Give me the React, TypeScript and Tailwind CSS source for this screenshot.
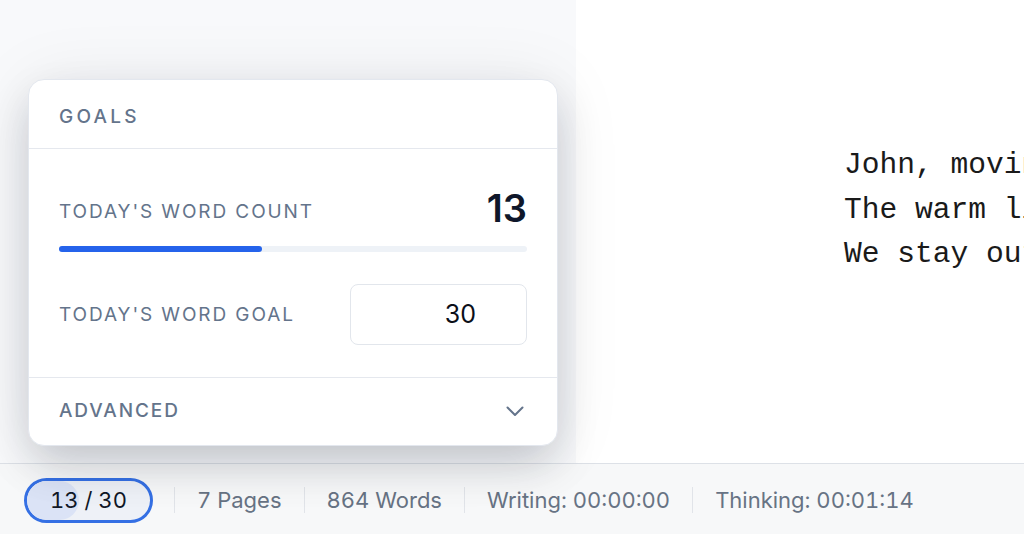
import React from "react";

const stats = ["7 Pages", "864 Words", "Writing: 00:00:00", "Thinking: 00:01:14"];

const scriptLines = [
  "John, moving toward the window, stops.",
  "The warm light of the lamp fades out.",
  "We stay outside as the rain begins.",
];

function Chevron() {
  return (
    <svg width="18" height="11" viewBox="0 0 18 11" fill="none">
      <path d="M1.5 1.5 9 9l7.5-7.5" stroke="#64748b" strokeWidth="2" strokeLinecap="round" strokeLinejoin="round" />
    </svg>
  );
}

function GoalsCard() {
  const count = 13;
  const goal = 30;
  return (
    <div className="relative z-10 w-[530px] rounded-2xl border border-[#e3e7ee] bg-white shadow-[0_20px_44px_-4px_rgba(15,23,42,0.2),0_4px_70px_rgba(15,23,42,0.08)]">
      <div className="flex h-[69px] items-center border-b border-[#e5e8ee] px-[30px] pt-[6px]">
        <span className="text-[19px] font-medium tracking-[0.17em] text-[#64748b]">GOALS</span>
      </div>

      <div className="border-b border-[#e5e8ee] px-[30px] pt-[37px] pb-[32px]">
        <div className="flex h-[44px] items-center justify-between">
          <span className="mt-[8px] text-[19px] tracking-[0.1em] text-[#64748b]">TODAY&apos;S WORD COUNT</span>
          <span className="text-[38px] font-semibold text-[#0f172a]">{count}</span>
        </div>
        <div className="mt-[16px] h-[6px] w-full rounded-full bg-[#eef2f7]">
          <div className="h-full rounded-full bg-[#2563eb]" style={{ width: `${(count / goal) * 100}%` }} />
        </div>
        <div className="mt-[32px] flex items-center justify-between">
          <span className="mt-[1px] text-[19px] tracking-[0.1em] text-[#64748b]">TODAY&apos;S WORD GOAL</span>
          <div className="flex h-[61px] w-[177px] items-center justify-end rounded-lg border border-[#e2e6ec] pr-[50px]">
            <span className="text-[25px] text-[#0b0f19]">{goal}</span>
          </div>
        </div>
      </div>

      <div className="flex h-[67px] items-center justify-between pl-[30px] pr-[33px]">
        <span className="text-[19px] font-medium tracking-[0.1em] text-[#64748b]">ADVANCED</span>
        <Chevron />
      </div>
    </div>
  );
}

export default function App() {
  return (
    <div className="flex h-[534px] w-[1024px] flex-col overflow-hidden font-['Inter',sans-serif]">
      <div className="flex min-h-0 flex-1">
        <aside className="w-[576px] shrink-0 bg-[#f8f9fb] pt-[79px] pl-[28px]">
          <GoalsCard />
        </aside>
        <main className="flex-1 overflow-hidden bg-white pt-[143px] pl-[268px]">
          {scriptLines.map((line) => (
            <div
              key={line}
              className="whitespace-nowrap font-['Liberation_Mono',monospace] text-[29.6px] leading-[44.5px] text-[#1a1a1a]"
            >
              {line}
            </div>
          ))}
        </main>
      </div>

      <footer className="flex h-[71px] shrink-0 items-center gap-[22px] border-t border-[#dde1e7] bg-[#f7f8f9] pl-[24px] pt-[2px]">
        <div className="relative mr-[-1px] flex h-[45px] w-[129px] items-center justify-center overflow-hidden rounded-full border-[3px] border-[#3570e4] bg-[#eef1f7]">
          <div className="absolute inset-y-0 left-0 w-[52px] rounded-full bg-[#dbe3f6]" />
          <span className="relative text-[22px] tabular-nums text-[#111827]">13 / 30</span>
        </div>
        {stats.map((s) => (
          <React.Fragment key={s}>
            <div className="h-[26px] w-px bg-[#e1e4e9]" />
            <span className="text-[22px] tabular-nums text-[#677384]">{s}</span>
          </React.Fragment>
        ))}
      </footer>
    </div>
  );
}
